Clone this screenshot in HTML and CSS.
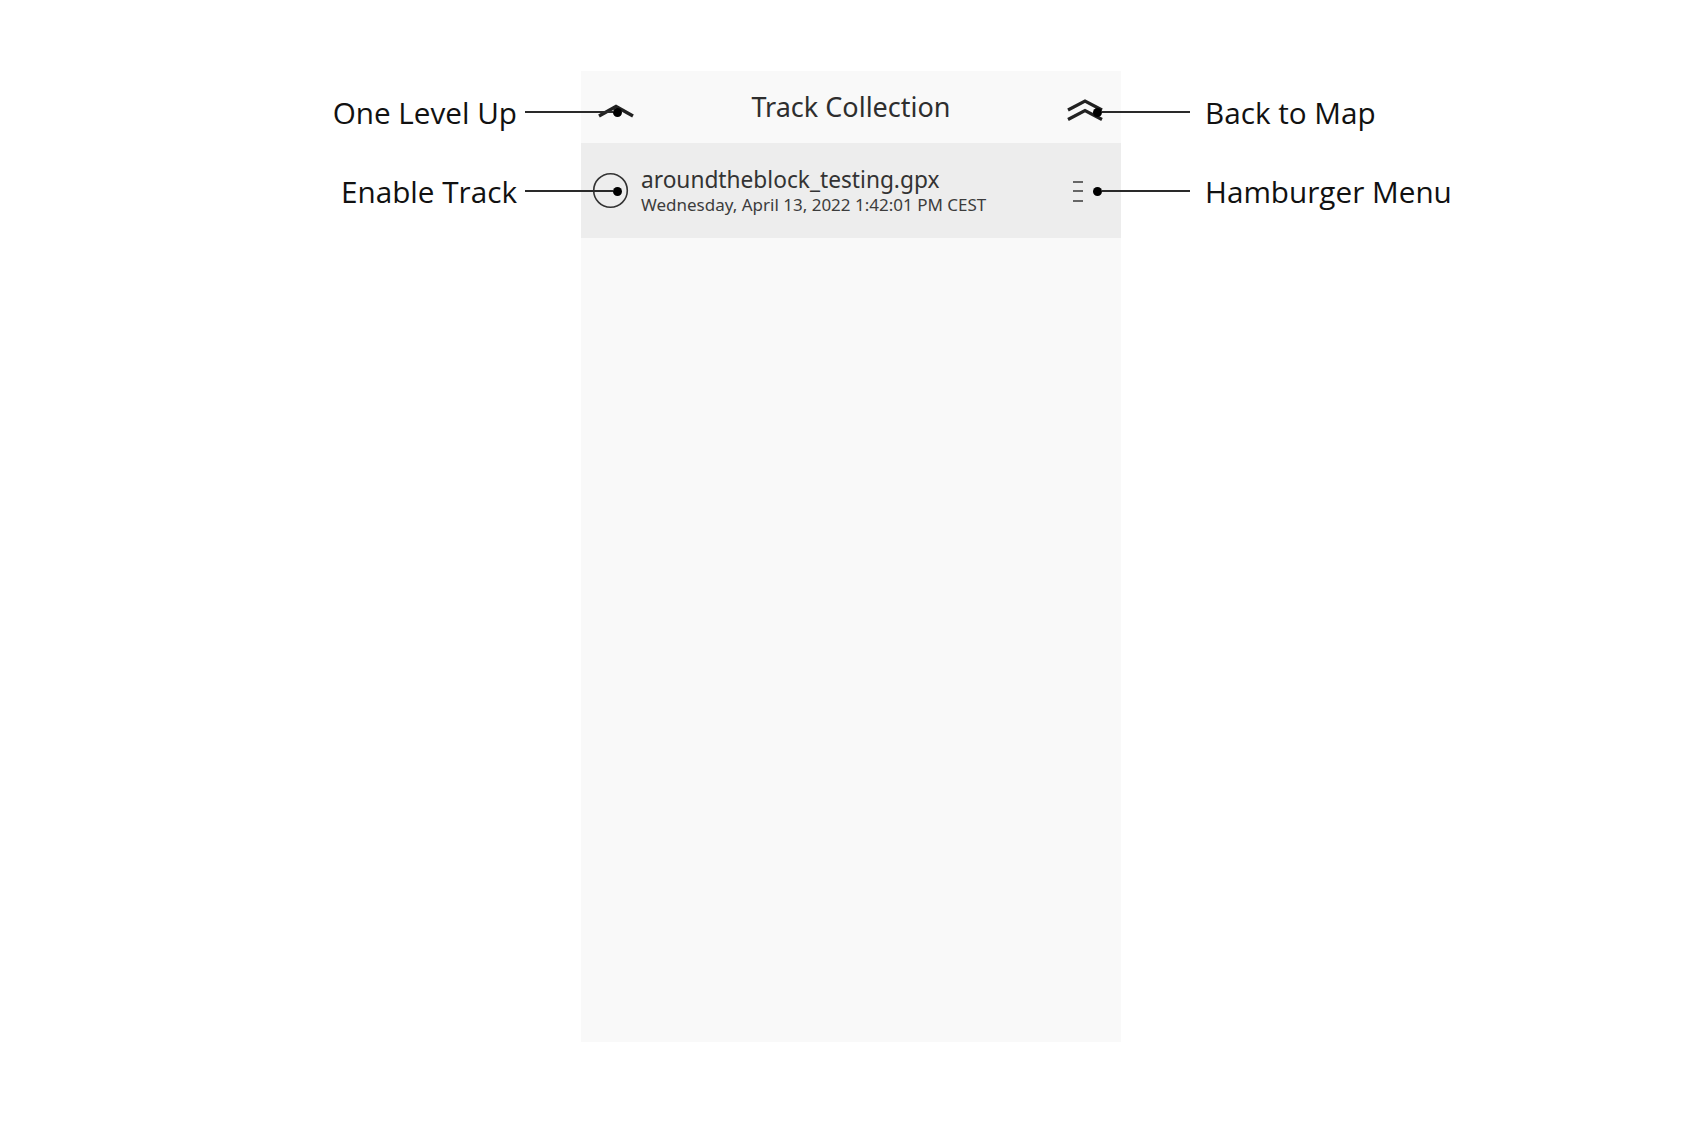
FILE: index.html
```html
<!DOCTYPE html>
<html>
<head>
<meta charset="utf-8">
<link rel="stylesheet" href="styles.css">
</head>
<body>
<div class="stage">
  <div class="phone">
    <div class="header">
      <div class="hl">
        <svg class="ico-up" width="38" height="14" viewBox="0 0 38 14"><path d="M2 12 L19 2.5 L36 12" fill="none" stroke="#222" stroke-width="3.4" stroke-linejoin="miter"/></svg>
      </div>
      <div class="title">Track Collection</div>
      <div class="hr">
        <svg class="ico-back" width="38" height="24" viewBox="0 0 38 24"><path d="M2 11 L19 2 L36 11" fill="none" stroke="#222" stroke-width="3.2"/><path d="M2 20.5 L19 11.5 L36 20.5" fill="none" stroke="#222" stroke-width="3.2"/></svg>
      </div>
    </div>
    <div class="row">
      <svg class="ico-check" width="37" height="37" viewBox="0 0 37 37"><circle cx="18.5" cy="18.5" r="16.8" fill="none" stroke="#333" stroke-width="1.6"/></svg>
      <div class="texts">
        <div class="fname">aroundtheblock_testing.gpx</div>
        <div class="fdate">Wednesday, April 13, 2022 1:42:01 PM CEST</div>
      </div>
      <div class="burger"><span></span><span></span><span></span></div>
    </div>
  </div>

  <div class="callout left c1"><span class="label">One Level Up</span><span class="line"></span><span class="dot"></span></div>
  <div class="callout left c2"><span class="label">Enable Track</span><span class="line"></span><span class="dot"></span></div>
  <div class="callout right c1"><span class="dot"></span><span class="line"></span><span class="label">Back to Map</span></div>
  <div class="callout right c2"><span class="dot"></span><span class="line"></span><span class="label">Hamburger Menu</span></div>
</div>
</body>
</html>
```

FILE: styles.css
```css
html, body {
  margin: 0;
  padding: 0;
  background: #ffffff;
}
.stage {
  position: relative;
  width: 1701px;
  height: 1134px;
  overflow: hidden;
  padding-top: 71px;
  box-sizing: border-box;
}
.phone {
  margin-left: 581px;
  width: 540px;
  height: 971px;
  background: #f9f9f9;
  font-family: "Noto Sans", "DejaVu Sans", sans-serif;
  color: #333;
}
.header {
  height: 72px;
  display: grid;
  grid-template-columns: 1fr auto 1fr;
  align-items: center;
}
.hl {
  display: flex;
  padding-left: 16px;
  padding-top: 8px;
}
.hr {
  display: flex;
  justify-content: flex-end;
  padding-right: 17px;
  padding-top: 8px;
}
.title {
  font-size: 27px;
  line-height: 36px;
  color: #2e2e2e;
  padding-top: 0;
}
.row {
  height: 95px;
  background: #ededed;
  display: flex;
  align-items: center;
  padding-left: 11px;
  padding-right: 38px;
  box-sizing: border-box;
}
.ico-check {
  flex: none;
}
.texts {
  margin-left: 12px;
  flex: 1;
  display: flex;
  flex-direction: column;
  padding-top: 1px;
}
.fname {
  font-size: 22.7px;
  line-height: 26px;
  color: #333;
}
.fdate {
  font-size: 17px;
  line-height: 22px;
  padding-top: 1px;
  color: #3c3c3c;
}
.burger {
  display: flex;
  flex-direction: column;
  gap: 7.5px;
  padding-top: 1px;
}
.burger span {
  display: block;
  width: 10px;
  height: 2px;
  background: #666;
}

.callout {
  position: absolute;
  display: flex;
  align-items: center;
  height: 40px;
  font-family: "Open Sans", "Noto Sans", sans-serif;
  font-size: 29.7px;
  color: #111;
}
.callout.left {
  left: 0;
  width: 622px;
  justify-content: flex-end;
}
.callout.right {
  left: 1093px;
}
.callout.c1 { top: 92px; }
.callout.c2 { top: 171px; }
.callout .line {
  display: block;
  height: 2px;
  background: #2a2a2a;
}
.callout .label {
  white-space: nowrap;
  line-height: 40px;
  position: relative;
  top: 1px;
}
.callout.left .line { width: 88px; margin-left: 8px; }
.callout.right .line { width: 88px; margin-right: 15px; }
.callout .dot {
  display: block;
  width: 9px;
  height: 9px;
  border-radius: 50%;
  background: #000;
  flex: none;
}
```
